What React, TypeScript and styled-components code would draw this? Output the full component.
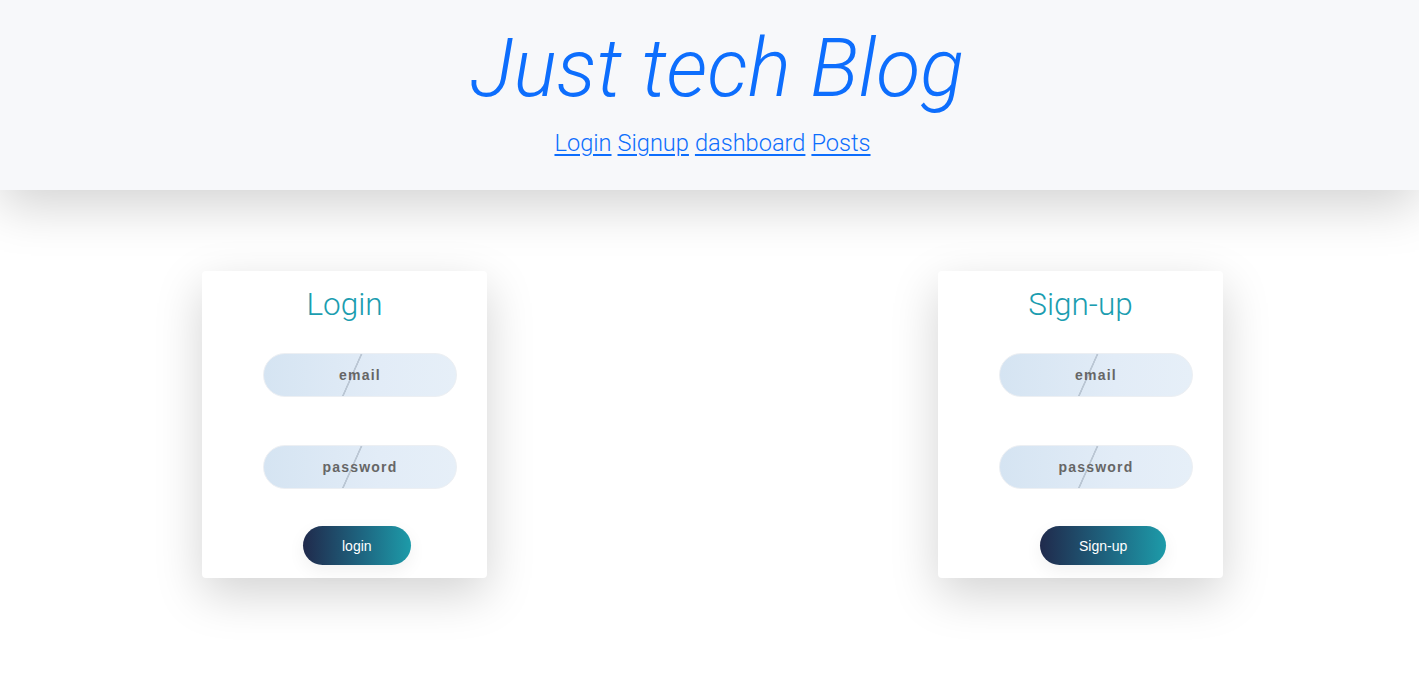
import React from "react";
import styled, { createGlobalStyle } from "styled-components";

const Global = createGlobalStyle`
  html, body { margin: 0; padding: 0; background: #ffffff; }
  body { font-family: Roboto, "Noto Sans", sans-serif; font-weight: 300; }
`;

const Header = styled.header`
  background: #f7f8fa;
  height: 190px;
  box-sizing: border-box;
  padding-top: 21px;
  text-align: center;
  box-shadow: 0 16px 48px rgba(0, 0, 0, 0.175);
  position: relative;
  z-index: 1;
`;

const Title = styled.h1`
  margin: 0;
  padding-left: 15px;
  font-family: Roboto, sans-serif;
  font-style: italic;
  font-weight: 300;
  font-size: 81px;
  line-height: 96px;
  color: #0d6efd;
`;

const Nav = styled.nav`
  margin-top: 10px;
  padding-left: 6px;
  display: flex;
  justify-content: center;
  gap: 6px;
`;

const NavLink = styled.a`
  font-family: Roboto, sans-serif;
  font-weight: 300;
  font-size: 23.6px;
  line-height: 32px;
  color: #0d6efd;
  text-decoration: underline;
  text-underline-offset: 3px;
`;

const Main = styled.main`
  display: flex;
  justify-content: space-between;
  padding: 81px 196px 120px 202px;
`;

const Card = styled.section`
  width: 285px;
  height: 307px;
  box-sizing: border-box;
  background: #fff;
  border-radius: 4px;
  box-shadow: 0 16px 48px rgba(0, 0, 0, 0.175);
  display: flex;
  flex-direction: column;
  padding-top: 12px;
`;

const CardTitle = styled.h2`
  margin: 0;
  text-align: center;
  font-family: Roboto, sans-serif;
  font-weight: 300;
  font-size: 31.5px;
  line-height: 44px;
  color: #1b9db0;
`;

const Field = styled.input`
  margin: 26px 0 0 61px;
  width: 194px;
  height: 44px;
  box-sizing: border-box;
  border: 1px solid #eceff3;
  border-radius: 22px;
  outline: none;
  background:
    linear-gradient(114deg, transparent 0 45.7%, rgba(150, 163, 178, 0.5) 46% 46.6%, transparent 46.9%),
    linear-gradient(90deg, #d5e4f2 0%, #e2ecf7 60%, #e6eff8 100%);
  text-align: center;
  font-family: "Liberation Sans", Arial, sans-serif;
  font-weight: 700;
  font-size: 14px;
  letter-spacing: 1.2px;
  color: #666;
  &::placeholder { color: #666; opacity: 1; }
  & + & { margin-top: 48px; }
`;

const Button = styled.button<{ $offset: number }>`
  margin: 37px 0 0 ${(p) => p.$offset}px;
  align-self: flex-start;
  height: 39px;
  padding: 0 39px;
  border: none;
  border-radius: 20px;
  background: linear-gradient(90deg, #202a4c 0%, #1e6681 55%, #1d9ba9 100%);
  color: #fff;
  font-family: "Liberation Sans", Arial, sans-serif;
  font-size: 14px;
  box-shadow: 0 6px 18px rgba(0, 0, 0, 0.06);
`;

function FormCard({ title, button, offset }: { title: string; button: string; offset: number }) {
  return (
    <Card>
      <CardTitle>{title}</CardTitle>
      <Field placeholder="email" />
      <Field placeholder="password" type="password" />
      <Button $offset={offset}>{button}</Button>
    </Card>
  );
}

export default function App() {
  return (
    <>
      <Global />
      <Header>
        <Title>Just tech Blog</Title>
        <Nav>
          <NavLink href="#">Login</NavLink>
          <NavLink href="#">Signup</NavLink>
          <NavLink href="#">dashboard</NavLink>
          <NavLink href="#">Posts</NavLink>
        </Nav>
      </Header>
      <Main>
        <FormCard title="Login" button="login" offset={101} />
        <FormCard title="Sign-up" button="Sign-up" offset={102} />
      </Main>
    </>
  );
}
